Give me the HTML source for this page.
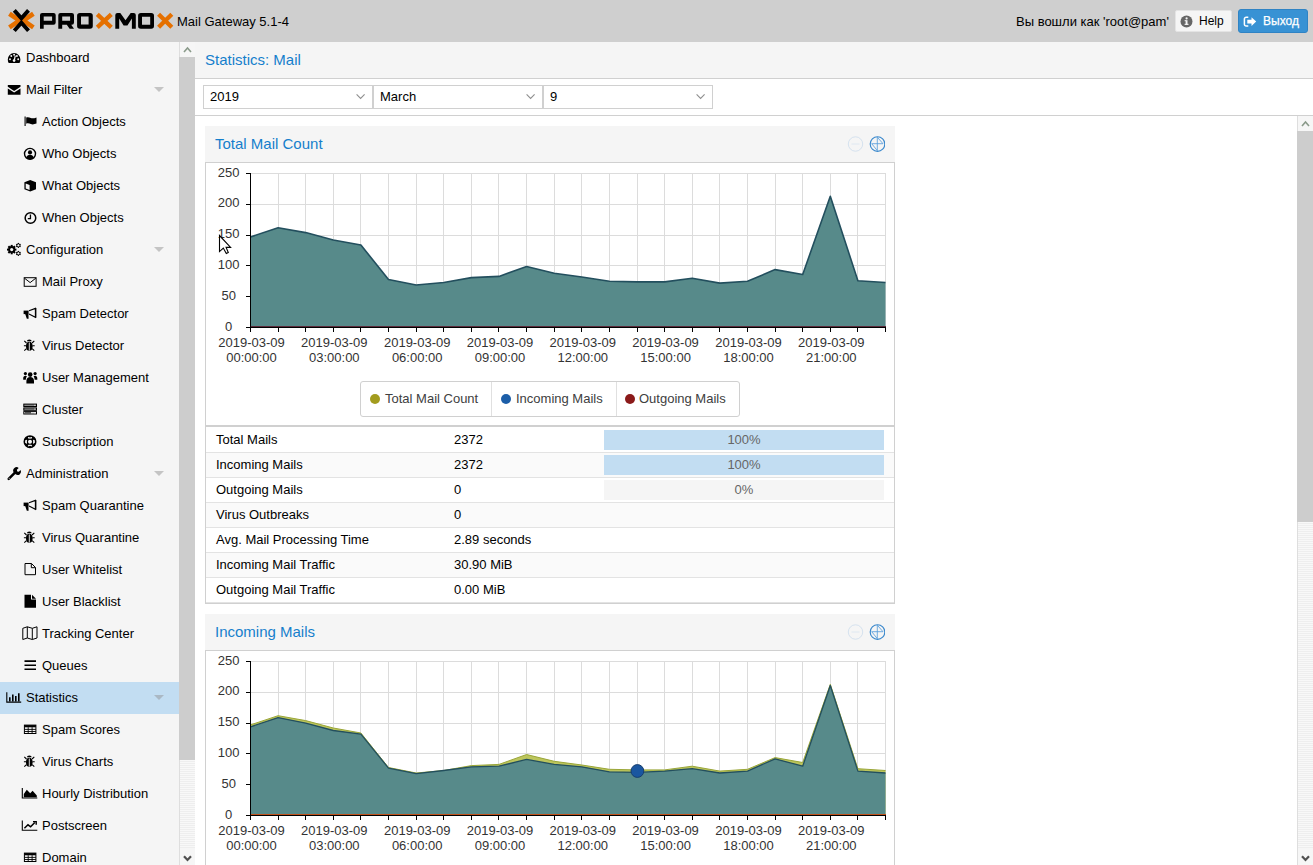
<!DOCTYPE html>
<html><head><meta charset="utf-8"><title>Proxmox Mail Gateway</title>
<style>
*{box-sizing:border-box}
html,body{margin:0;padding:0;width:1313px;height:865px;overflow:hidden;background:#fff;font-family:"Liberation Sans",sans-serif;font-size:13px;color:#000}
.abs{position:absolute}
#hdr{position:absolute;left:0;top:0;width:1313px;height:42px;background:#cfcfcf}
#ver{position:absolute;left:177px;top:14px;line-height:16px;font-size:13px;color:#000}
#login{position:absolute;left:1016px;top:14px;line-height:16px;color:#000}
#help{position:absolute;left:1175px;top:10px;width:57px;height:22px;background:#f5f5f5;border:1px solid #e4e4e4;border-radius:2px}
#help span{position:absolute;left:23px;top:3px;font-size:12px;line-height:15px;color:#000}
#logout{position:absolute;left:1238px;top:9px;width:70px;height:24px;background:#3892d4;border:1px solid #2f83c4;border-radius:3px}
#logout span{position:absolute;left:24px;top:4px;font-size:12px;line-height:15px;color:#fff;-webkit-text-stroke:.25px #fff}
#nav{position:absolute;left:0;top:42px;width:179px;height:823px;background:#f5f5f5;overflow:hidden}
.nrow{position:absolute;left:0;width:179px;height:32px}
.nrow.sel{background:#c2ddf2}
.nic{position:absolute;top:9px;overflow:visible}
.ntx{position:absolute;top:8px;line-height:16px;white-space:nowrap}
.nexp{position:absolute;left:154px;top:13px;width:0;height:0;border-left:5.5px solid transparent;border-right:5.5px solid transparent;border-top:5px solid #c4c4c4}
.nrow.sel .nexp{border-top-color:#aab8c4}
.sb{position:absolute;width:16px;background:repeating-linear-gradient(to bottom,#f8f8f8 0px,#f8f8f8 1px,#eeeeee 1px,#eeeeee 2px);border-left:1px solid #dedede}
.sb .up{position:absolute;left:0;top:0;width:15px;height:15px;background:#f6f6f6}
.sb .dn{position:absolute;left:0;bottom:0;width:15px;height:17px;background:#f6f6f6}
.sb .thumb{position:absolute;left:-1px;top:15px;width:16px;background:#cdcdcd}
.sb svg{position:absolute}
#main{position:absolute;left:195px;top:42px;width:1118px;height:823px;background:#fff}
#title{position:absolute;left:0;top:0;width:1118px;height:37px;background:#f5f5f5;border-bottom:1px solid #d0d0d0}
#title span{position:absolute;left:10px;top:9px;font-size:15px;line-height:18px;color:#157fcc}
#tbar{position:absolute;left:0;top:37px;width:1118px;height:37px;background:#fff;border-bottom:1px solid #d0d0d0}
.combo{position:absolute;top:6px;height:24px;border:1px solid #d0d0d0;background:#fff}
.combo span{position:absolute;left:6px;top:3px;line-height:16px}
.combo svg{position:absolute;right:6px;top:7px}
.panel{position:absolute;left:10px;width:690px;background:#fff}
.phdr{position:absolute;left:0;top:0;width:690px;height:37px;background:#f5f5f5;border-bottom:1px solid #d0d0d0}
.phdr span{position:absolute;left:10px;top:9px;font-size:15px;line-height:18px;color:#157fcc}
.tools{position:absolute;left:640px;top:8px}
.pbody{position:absolute;left:0;top:37px;width:690px;border:1px solid #d0d0d0;border-top:none}
svg.chart{position:absolute;left:0;top:0}
svg.chart text{font-family:"Liberation Sans",sans-serif;font-size:13px;fill:#333}
.legend{position:absolute;left:155px;top:218px;width:380px;height:36px;border:1px solid #d0d0d0;border-radius:3px;background:#fff}
.litem{position:absolute;top:0;height:34px;border-right:1px solid #e0e0e0}
.litem i{position:absolute;left:9px;top:12px;width:10px;height:10px;border-radius:50%}
.litem span{position:absolute;left:24px;top:9px;line-height:16px;color:#404040;white-space:nowrap}
.trow{position:absolute;left:206px;width:688px;height:25px;background:#fff}
.trow.alt{background:#fafafa}
.tc1{position:absolute;left:10px;top:5px;line-height:16px}
.tc2{position:absolute;left:248px;top:5px;line-height:16px}
.pbar{position:absolute;left:398px;top:3px;width:280px;height:20px;background:#f5f5f5}
.pfill{position:absolute;left:0;top:0;height:20px;background:#c2ddf2}
.ptx{position:absolute;left:0;width:280px;top:2px;line-height:16px;text-align:center;color:#666}

</style></head><body>
<div id="hdr"><svg style="position:absolute;left:0;top:0" width="180" height="42" viewBox="0 0 180 42">
<g fill="none" stroke-linecap="butt">
<path d="M9.4 13.7L19.6 20.55 9.4 27.4" stroke="#e57000" stroke-width="4.7"/>
<path d="M33.4 13.7L23.2 20.55 33.4 27.4" stroke="#e57000" stroke-width="4.7"/>
<path d="M14.3 10.4L21.4 18.4 28.5 10.4" stroke="#000" stroke-width="3.9"/>
<path d="M14.3 30.7L21.4 22.7 28.5 30.7" stroke="#000" stroke-width="3.9"/>
</g>
<g fill="#000" fill-rule="evenodd">
<path d="M40 15.1a2.2 2.2 0 0 1 2.2-2.2H53.5a2.2 2.2 0 0 1 2.2 2.2V22.6a2.2 2.2 0 0 1-2.2 2.2H43.7V28.8H40z M43.7 16.4V20.8H52.1V16.4z"/>
<path d="M58.3 15.1a2.2 2.2 0 0 1 2.2-2.2H71.8a2.2 2.2 0 0 1 2.2 2.2V22.6a2.2 2.2 0 0 1-2.2 2.2H71.2L74 28.8H69.6L66.8 24.8H62.2V28.8H58.3z M62.2 16.4V20.8H70.1V16.4z"/>
<path d="M79.9 12.9H90a2.8 2.8 0 0 1 2.8 2.8V26a2.8 2.8 0 0 1-2.8 2.8H79.9a2.8 2.8 0 0 1-2.8-2.8V15.7a2.8 2.8 0 0 1 2.8-2.8z M81 16.6V24.6H88.6V16.6z"/>
<path d="M117.5 12.9H120.3L125.5 20.2 130.7 12.9H133.6a2.2 2.2 0 0 1 2.2 2.2V28.8H131.9V18.6L127.4 25.6H123.6L119.2 18.6V28.8H115.3V15.1a2.2 2.2 0 0 1 2.2-2.2z"/>
<path d="M140.9 12.9H151.2a2.8 2.8 0 0 1 2.8 2.8V26a2.8 2.8 0 0 1-2.8 2.8H140.9a2.8 2.8 0 0 1-2.8-2.8V15.7a2.8 2.8 0 0 1 2.8-2.8z M142 16.7V24.7H150.2V16.7z"/>
</g>
<g stroke="#e57000" stroke-width="4.3" fill="none">
<path d="M97.3 14.3L111.3 27.3M111.3 14.3L97.3 27.3"/>
<path d="M158.6 14.3L171.8 27.3M171.8 14.3L158.6 27.3"/>
</g>
</svg>
<div id="ver">Mail Gateway 5.1-4</div>
<div id="login">Вы вошли как 'root@pam'</div>
<div id="help"><svg style="position:absolute;left:4px;top:4px" width="13" height="13" viewBox="0 0 13 13"><circle cx="6.5" cy="6.5" r="6" fill="#666"/><rect x="5.6" y="5.2" width="1.9" height="4.5" fill="#f5f5f5"/><rect x="4.6" y="8.8" width="3.9" height="1.1" fill="#f5f5f5"/><rect x="4.6" y="5.2" width="1.5" height="1" fill="#f5f5f5"/><circle cx="6.6" cy="3.4" r="1.1" fill="#f5f5f5"/></svg><span>Help</span></div>
<div id="logout"><svg style="position:absolute;left:4px;top:5px" width="15" height="13" viewBox="0 0 15 13"><path d="M5.3 2.2H3.2A1.8 1.8 0 0 0 1.4 4v5.2A1.8 1.8 0 0 0 3.2 11H5.3" fill="none" stroke="#fff" stroke-width="1.5"/><path d="M4.3 4.8h4.2V2.2l4.7 4.4-4.7 4.4V8.4H4.3z" fill="#fff"/></svg><span>Выход</span></div>
</div>
<div id="nav"><div class="nrow" style="top:0px"><svg class="nic" style="left:7px" width="14" height="14" viewBox="0 0 14 14"><path d="M7.1 2A6.4 6.4 0 0 0 .8 8.4c0 1.4.3 2.6.9 3.6h10.8c.6-1 .9-2.2.9-3.6A6.4 6.4 0 0 0 7.1 2z" fill="#000"/><circle cx="3" cy="8.2" r=".95" fill="#f5f5f5"/><circle cx="4.3" cy="5" r=".95" fill="#f5f5f5"/><circle cx="7.1" cy="3.8" r=".95" fill="#f5f5f5"/><circle cx="9.9" cy="5" r=".95" fill="#f5f5f5"/><circle cx="11.2" cy="8.2" r=".95" fill="#f5f5f5"/><path d="M8.3 4.6L7.3 9" stroke="#f5f5f5" stroke-width="1.2"/><circle cx="7.1" cy="9.6" r="1.3" fill="#f5f5f5"/></svg><span class="ntx" style="left:26px">Dashboard</span></div><div class="nrow" style="top:32px"><svg class="nic" style="left:7px" width="14" height="14" viewBox="0 0 14 14"><path d="M.8 2h12.7v1.8L7.15 7.9.8 3.8z" fill="#000"/><path d="M.8 5.6L7.15 9.6l6.35-4V11.8H.8z" fill="#000"/></svg><span class="ntx" style="left:26px">Mail Filter</span><span class="nexp"></span></div><div class="nrow" style="top:64px"><svg class="nic" style="left:23px" width="14" height="14" viewBox="0 0 14 14"><path d="M2.1 1.5V11" stroke="#000" stroke-width="1.1"/><path d="M3.2 2.6c1.6-1 3.2-.2 4.6.4 1.6.6 3.5.2 5.7-.6v6.2c-2.2.8-4 1.1-5.7.5-1.4-.6-3-1.3-4.6-.3z" fill="#000"/></svg><span class="ntx" style="left:42px">Action Objects</span></div><div class="nrow" style="top:96px"><svg class="nic" style="left:23px" width="14" height="14" viewBox="0 0 14 14"><circle cx="7" cy="6.85" r="5.5" fill="none" stroke="#000" stroke-width="1.4"/><circle cx="7" cy="5.4" r="2.1" fill="#000"/><path d="M3.1 10.8c.6-2 2.1-3 3.9-3s3.3 1 3.9 3c-1 1-2.4 1.6-3.9 1.6s-2.9-.6-3.9-1.6z" fill="#000"/></svg><span class="ntx" style="left:42px">Who Objects</span></div><div class="nrow" style="top:128px"><svg class="nic" style="left:23px" width="14" height="14" viewBox="0 0 14 14"><path d="M7.2 1L13 3.2V10.3L7.2 12.5 1.4 10.3V3.2z" fill="#000"/><path d="M2.7 4.5L6.6 6v5l-3.9-1.5z" fill="#f5f5f5"/><path d="M2.9 3.6l4.3-1.5 4.3 1.5-4.3 1.5z" fill="#000"/></svg><span class="ntx" style="left:42px">What Objects</span></div><div class="nrow" style="top:160px"><svg class="nic" style="left:23px" width="14" height="14" viewBox="0 0 14 14"><circle cx="7.45" cy="7" r="5.3" fill="none" stroke="#000" stroke-width="1.5"/><path d="M7.45 3.6V7.6H4.8" fill="none" stroke="#000" stroke-width="1.3"/></svg><span class="ntx" style="left:42px">When Objects</span></div><div class="nrow" style="top:192px"><svg class="nic" style="left:7px" width="14" height="14" viewBox="0 0 14 14"><g transform="translate(4.7 6.6)" fill="#000"><rect x="-1" y="-4.7" width="2" height="2" transform="rotate(0)"/><rect x="-1" y="-4.7" width="2" height="2" transform="rotate(45)"/><rect x="-1" y="-4.7" width="2" height="2" transform="rotate(90)"/><rect x="-1" y="-4.7" width="2" height="2" transform="rotate(135)"/><rect x="-1" y="-4.7" width="2" height="2" transform="rotate(180)"/><rect x="-1" y="-4.7" width="2" height="2" transform="rotate(225)"/><rect x="-1" y="-4.7" width="2" height="2" transform="rotate(270)"/><rect x="-1" y="-4.7" width="2" height="2" transform="rotate(315)"/><circle r="3.5"/><circle r="1.6" fill="#f5f5f5"/></g><g transform="translate(11.4 2.4)" fill="#000"><rect x="-.55" y="-2.5" width="1.1" height="1.1" transform="rotate(0)"/><rect x="-.55" y="-2.5" width="1.1" height="1.1" transform="rotate(60)"/><rect x="-.55" y="-2.5" width="1.1" height="1.1" transform="rotate(120)"/><rect x="-.55" y="-2.5" width="1.1" height="1.1" transform="rotate(180)"/><rect x="-.55" y="-2.5" width="1.1" height="1.1" transform="rotate(240)"/><rect x="-.55" y="-2.5" width="1.1" height="1.1" transform="rotate(300)"/><circle r="1.6" fill="none" stroke="#000" stroke-width="1"/></g><g transform="translate(11.4 10.4)" fill="#000"><rect x="-.55" y="-2.5" width="1.1" height="1.1" transform="rotate(0)"/><rect x="-.55" y="-2.5" width="1.1" height="1.1" transform="rotate(60)"/><rect x="-.55" y="-2.5" width="1.1" height="1.1" transform="rotate(120)"/><rect x="-.55" y="-2.5" width="1.1" height="1.1" transform="rotate(180)"/><rect x="-.55" y="-2.5" width="1.1" height="1.1" transform="rotate(240)"/><rect x="-.55" y="-2.5" width="1.1" height="1.1" transform="rotate(300)"/><circle r="1.6" fill="none" stroke="#000" stroke-width="1"/></g></svg><span class="ntx" style="left:26px">Configuration</span><span class="nexp"></span></div><div class="nrow" style="top:224px"><svg class="nic" style="left:23px" width="14" height="14" viewBox="0 0 14 14"><rect x="1.2" y="2.7" width="11.9" height="8.6" fill="none" stroke="#000" stroke-width="1"/><path d="M1.4 3.1L7.15 7.6l5.75-4.5" fill="none" stroke="#000" stroke-width="1"/></svg><span class="ntx" style="left:42px">Mail Proxy</span></div><div class="nrow" style="top:256px"><svg class="nic" style="left:23px" width="14" height="14" viewBox="0 0 14 14"><path d="M.6 3.6H5.6V7.1H.6z" fill="#000"/><path d="M2.2 7.1H5.4L5.6 11.7H3.8z" fill="#000"/><path d="M6 3.7L12.4 1.4V10.3L6 7.1" fill="none" stroke="#000" stroke-width="1.1"/><path d="M12.8 1V10.8" stroke="#000" stroke-width="1.2"/></svg><span class="ntx" style="left:42px">Spam Detector</span></div><div class="nrow" style="top:288px"><svg class="nic" style="left:23px" width="14" height="14" viewBox="0 0 14 14"><path d="M3.9 2.2A2.4 1.7 0 0 1 8.7 2.2z" fill="#000"/><ellipse cx="6.3" cy="7.3" rx="3.3" ry="4.5" fill="#000"/><path d="M6.3 3.5v8" stroke="#f5f5f5" stroke-width=".9"/><path d="M1.3 1.8l2.2 2.2M11.3 1.8L9.1 4M.9 6.8h2.4M11.7 6.8H9.3M1.3 11.7l2.2-2M11.3 11.7l-2.2-2" stroke="#000" stroke-width="1.1"/></svg><span class="ntx" style="left:42px">Virus Detector</span></div><div class="nrow" style="top:320px"><svg class="nic" style="left:23px" width="14" height="14" viewBox="0 0 14 14"><circle cx="7.2" cy="3.6" r="2.3" fill="#000"/><circle cx="2.4" cy="2.6" r="1.6" fill="#000"/><circle cx="12.1" cy="2.6" r="1.6" fill="#000"/><path d="M3.4 12.6V10c0-2.6 1.5-3.9 3.8-3.9s3.8 1.3 3.8 3.9v2.6z" fill="#000"/><path d="M.2 8.8V7.3c0-1.6.9-2.5 2.2-2.5.7 0 1.2.2 1.6.5-.7.7-1.1 1.9-1.2 3.5z M14.3 8.8V7.3c0-1.6-.9-2.5-2.2-2.5-.7 0-1.2.2-1.6.5.7.7 1.1 1.9 1.2 3.5z" fill="#000"/></svg><span class="ntx" style="left:42px">User Management</span></div><div class="nrow" style="top:352px"><svg class="nic" style="left:23px" width="14" height="14" viewBox="0 0 14 14"><rect x=".8" y="1.1" width="12.7" height="2.4" fill="#888" stroke="#000" stroke-width="1"/><rect x=".8" y="4.9" width="12.7" height="2.4" fill="#888" stroke="#000" stroke-width="1"/><rect x=".8" y="8.6" width="12.7" height="2.4" fill="#f5f5f5" stroke="#000" stroke-width="1"/><path d="M11.3 2.3h1.2M11.3 6.1h1.2M11.3 9.8h1.2" stroke="#f5f5f5" stroke-width=".9"/><path d="M2 9.8h6" stroke="#000" stroke-width=".9"/></svg><span class="ntx" style="left:42px">Cluster</span></div><div class="nrow" style="top:384px"><svg class="nic" style="left:23px" width="14" height="14" viewBox="0 0 14 14"><circle cx="7" cy="6.65" r="5.4" fill="none" stroke="#000" stroke-width="2.2"/><circle cx="7" cy="6.65" r="2.6" fill="none" stroke="#000" stroke-width="1.2"/><path d="M3.2 2.85l2 2M10.8 2.85l-2 2M3.2 10.45l2-2M10.8 10.45l-2-2" stroke="#000" stroke-width="2.2"/><path d="M2.6 5.2v2.9M11.4 5.2v2.9M5.55 2v1M8.45 2v1M5.55 10.3v1M8.45 10.3v1" stroke="#f5f5f5" stroke-width=".9"/></svg><span class="ntx" style="left:42px">Subscription</span></div><div class="nrow" style="top:416px"><svg class="nic" style="left:7px" width="14" height="14" viewBox="0 0 14 14"><path d="M1.7 11.8l6-6" stroke="#000" stroke-width="2.5" stroke-linecap="round"/><path d="M6.6 5.2A3.4 3.4 0 0 1 11.7.9L9.9 2.8l.3 1.6 1.6.3L13.6 2.9A3.4 3.4 0 0 1 8.6 7.3z" fill="#000"/><circle cx="2.2" cy="11.3" r=".5" fill="#f5f5f5"/></svg><span class="ntx" style="left:26px">Administration</span><span class="nexp"></span></div><div class="nrow" style="top:448px"><svg class="nic" style="left:23px" width="14" height="14" viewBox="0 0 14 14"><path d="M.6 3.6H5.6V7.1H.6z" fill="#000"/><path d="M2.2 7.1H5.4L5.6 11.7H3.8z" fill="#000"/><path d="M6 3.7L12.4 1.4V10.3L6 7.1" fill="none" stroke="#000" stroke-width="1.1"/><path d="M12.8 1V10.8" stroke="#000" stroke-width="1.2"/></svg><span class="ntx" style="left:42px">Spam Quarantine</span></div><div class="nrow" style="top:480px"><svg class="nic" style="left:23px" width="14" height="14" viewBox="0 0 14 14"><path d="M3.9 2.2A2.4 1.7 0 0 1 8.7 2.2z" fill="#000"/><ellipse cx="6.3" cy="7.3" rx="3.3" ry="4.5" fill="#000"/><path d="M6.3 3.5v8" stroke="#f5f5f5" stroke-width=".9"/><path d="M1.3 1.8l2.2 2.2M11.3 1.8L9.1 4M.9 6.8h2.4M11.7 6.8H9.3M1.3 11.7l2.2-2M11.3 11.7l-2.2-2" stroke="#000" stroke-width="1.1"/></svg><span class="ntx" style="left:42px">Virus Quarantine</span></div><div class="nrow" style="top:512px"><svg class="nic" style="left:23px" width="14" height="14" viewBox="0 0 14 14"><path d="M2 .5h6.5L12.5 4.5V11.7H2z" fill="none" stroke="#000" stroke-width="1"/><path d="M8.3.6V4.7h4.1" fill="none" stroke="#000" stroke-width="1"/></svg><span class="ntx" style="left:42px">User Whitelist</span></div><div class="nrow" style="top:544px"><svg class="nic" style="left:23px" width="14" height="14" viewBox="0 0 14 14"><path d="M1.5 -.3H8V4.6h5V12.7H1.5z" fill="#000"/><path d="M9 -.3L13 3.7H9z" fill="#000"/></svg><span class="ntx" style="left:42px">User Blacklist</span></div><div class="nrow" style="top:576px"><svg class="nic" style="left:23px" width="14" height="14" viewBox="0 0 14 14"><path d="M-.2 1.3L4.3-.2 9.3 1.3 14 -.2V11L9.3 12.5 4.3 11-.2 12.5z M4.3-.2V11 M9.3 1.3v11.2" fill="none" stroke="#000" stroke-width="1" stroke-linejoin="round"/></svg><span class="ntx" style="left:42px">Tracking Center</span></div><div class="nrow" style="top:608px"><svg class="nic" style="left:23px" width="14" height="14" viewBox="0 0 14 14"><path d="M1.5 2.1h11.5M1.5 6.2h11.5M1.5 10.3h11.5" stroke="#000" stroke-width="1.6"/></svg><span class="ntx" style="left:42px">Queues</span></div><div class="nrow sel" style="top:640px"><svg class="nic" style="left:7px" width="14" height="14" viewBox="0 0 14 14"><path d="M-.2 1.3V11.1H14.2" fill="none" stroke="#000" stroke-width="1.1"/><path d="M2.8 6.2v4.2M5.8 3.6v6.8M8.8 5v5.4M11.8 2.2v8.2" stroke="#000" stroke-width="1.6"/></svg><span class="ntx" style="left:26px">Statistics</span><span class="nexp"></span></div><div class="nrow" style="top:672px"><svg class="nic" style="left:23px" width="14" height="14" viewBox="0 0 14 14"><rect x="1.4" y="2.1" width="11.5" height="8.4" fill="none" stroke="#000" stroke-width="1"/><rect x="1.4" y="2.1" width="11.5" height="2.2" fill="#000"/><path d="M1.4 6.4h11.5M1.4 8.5h11.5M5.2 4.2v6.3M9.1 4.2v6.3" stroke="#000" stroke-width=".9"/></svg><span class="ntx" style="left:42px">Spam Scores</span></div><div class="nrow" style="top:704px"><svg class="nic" style="left:23px" width="14" height="14" viewBox="0 0 14 14"><path d="M3.9 2.2A2.4 1.7 0 0 1 8.7 2.2z" fill="#000"/><ellipse cx="6.3" cy="7.3" rx="3.3" ry="4.5" fill="#000"/><path d="M6.3 3.5v8" stroke="#f5f5f5" stroke-width=".9"/><path d="M1.3 1.8l2.2 2.2M11.3 1.8L9.1 4M.9 6.8h2.4M11.7 6.8H9.3M1.3 11.7l2.2-2M11.3 11.7l-2.2-2" stroke="#000" stroke-width="1.1"/></svg><span class="ntx" style="left:42px">Virus Charts</span></div><div class="nrow" style="top:736px"><svg class="nic" style="left:23px" width="14" height="14" viewBox="0 0 14 14"><path d="M-.7 1V11H14.3" fill="none" stroke="#000" stroke-width="1.1"/><path d="M.8 10.3V7.1L3.8 2.8 7.2 6.3 9.6 3.8 13.8 8.6v1.7z" fill="#000"/></svg><span class="ntx" style="left:42px">Hourly Distribution</span></div><div class="nrow" style="top:768px"><svg class="nic" style="left:23px" width="14" height="14" viewBox="0 0 14 14"><path d="M-.7 1.4V11.3H14.3" fill="none" stroke="#000" stroke-width="1.1"/><path d="M1.4 9.3L5 5.8 7.6 7.8 11.8 3.4" fill="none" stroke="#000" stroke-width="1.5"/><path d="M10 2.6h3.2V5.8" fill="none" stroke="#000" stroke-width="1.4"/></svg><span class="ntx" style="left:42px">Postscreen</span></div><div class="nrow" style="top:800px"><svg class="nic" style="left:23px" width="14" height="14" viewBox="0 0 14 14"><rect x="1.4" y="2.1" width="11.5" height="8.4" fill="none" stroke="#000" stroke-width="1"/><rect x="1.4" y="2.1" width="11.5" height="2.2" fill="#000"/><path d="M1.4 6.4h11.5M1.4 8.5h11.5M5.2 4.2v6.3M9.1 4.2v6.3" stroke="#000" stroke-width=".9"/></svg><span class="ntx" style="left:42px">Domain</span></div></div>
<div class="sb" style="left:179px;top:42px;height:823px"><div class="up"><svg style="left:3px;top:4px" width="9" height="7" viewBox="0 0 9 7"><path d="M1 6L4.5 2 8 6" fill="none" stroke="#8a9a8a" stroke-width="1.6"/></svg></div><div class="thumb" style="height:703px"></div><div class="dn"><svg style="left:3px;top:7px" width="9" height="7" viewBox="0 0 9 7"><path d="M1 1.2L4.5 5 8 1.2" fill="none" stroke="#505050" stroke-width="2.2"/></svg></div></div>
<div id="main">
<div id="title"><span>Statistics: Mail</span></div>
<div id="tbar">
<div class="combo" style="left:8px;width:170px"><span>2019</span><svg width="10" height="7" viewBox="0 0 10 7"><path d="M.6 1.3L4.6 5.4 8.6 1.3" fill="none" stroke="#8f8f8f" stroke-width="1.1"/></svg></div>
<div class="combo" style="left:178px;width:170px"><span>March</span><svg width="10" height="7" viewBox="0 0 10 7"><path d="M.6 1.3L4.6 5.4 8.6 1.3" fill="none" stroke="#8f8f8f" stroke-width="1.1"/></svg></div>
<div class="combo" style="left:348px;width:170px"><span>9</span><svg width="10" height="7" viewBox="0 0 10 7"><path d="M.6 1.3L4.6 5.4 8.6 1.3" fill="none" stroke="#8f8f8f" stroke-width="1.1"/></svg></div>
</div>
</div>
<div id="content" class="abs" style="left:0;top:0;width:1313px;height:865px">
<div class="abs" style="left:205px;top:126px;width:690px;height:37px;background:#f5f5f5;border-bottom:1px solid #d0d0d0"><span class="abs" style="left:10px;top:9px;font-size:15px;line-height:18px;color:#157fcc">Total Mail Count</span><svg class="tools" width="40" height="20" viewBox="0 0 40 20">
<circle cx="10.5" cy="10" r="7.2" fill="none" stroke="#d5e2ef" stroke-width="1"/>
<path d="M6.5 10h8" stroke="#dfe8f1" stroke-width="1"/>
<circle cx="32.5" cy="10" r="7.3" fill="none" stroke="#3a88cc" stroke-width="1.15"/>
<path d="M32.3 3.2v13.6M32.3 3.2l5.7 6.5H26.7L32.3 16.6" fill="none" stroke="#5a9edb" stroke-width=".85"/>
</svg></div>
<div class="abs" style="left:205px;top:163px;width:690px;height:441px;border:1px solid #d0d0d0;border-top:none"></div>
<svg class="chart" width="1313" height="865" viewBox="0 0 1313 865"><path d="M250.5 173V327M278.5 173V327M305.5 173V327M333.5 173V327M360.5 173V327M388.5 173V327M416.5 173V327M443.5 173V327M471.5 173V327M498.5 173V327M526.5 173V327M554.5 173V327M581.5 173V327M609.5 173V327M637.5 173V327M664.5 173V327M692.5 173V327M719.5 173V327M747.5 173V327M775.5 173V327M802.5 173V327M830.5 173V327M857.5 173V327M885.5 173V327M250 173.5H886M250 204.5H886M250 235.5H886M250 265.5H886M250 296.5H886M250 327.5H886" stroke="#dcdcdc" stroke-width="1" fill="none"/><polygon points="250.5,327.5 250.5,236.9 278.1,227.7 305.7,232.6 333.3,240.0 360.9,245.0 388.5,279.5 416.2,285.0 443.8,282.5 471.4,277.6 499.0,276.4 526.6,266.5 554.2,273.3 581.8,277.0 609.4,281.3 637.0,281.9 664.6,281.9 692.2,278.2 719.8,283.1 747.5,281.3 775.1,269.6 802.7,274.5 830.3,196.3 857.9,280.7 885.5,282.5 885.5,327.5" fill="#578a8a" stroke="none"/><polyline points="250.5,236.9 278.1,227.7 305.7,232.6 333.3,240.0 360.9,245.0 388.5,279.5 416.2,285.0 443.8,282.5 471.4,277.6 499.0,276.4 526.6,266.5 554.2,273.3 581.8,277.0 609.4,281.3 637.0,281.9 664.6,281.9 692.2,278.2 719.8,283.1 747.5,281.3 775.1,269.6 802.7,274.5 830.3,196.3 857.9,280.7 885.5,282.5" fill="none" stroke="#234f5e" stroke-width="1.6" stroke-linejoin="round"/><path d="M251 326.5H886" stroke="#5a2a3a" stroke-width="1"/><path d="M250.5 173V332M246 327.5H886M246 173.5H250M246 204.5H250M246 235.5H250M246 265.5H250M246 296.5H250M246 327.5H250M250.5 327V332M278.5 327V332M305.5 327V332M333.5 327V332M360.5 327V332M388.5 327V332M416.5 327V332M443.5 327V332M471.5 327V332M498.5 327V332M526.5 327V332M554.5 327V332M581.5 327V332M609.5 327V332M637.5 327V332M664.5 327V332M692.5 327V332M719.5 327V332M747.5 327V332M775.5 327V332M802.5 327V332M830.5 327V332M857.5 327V332M885.5 327V332" stroke="#000" stroke-width="1" fill="none"/><text x="228.7" y="176.6" text-anchor="middle">250</text><text x="228.7" y="207.4" text-anchor="middle">200</text><text x="228.7" y="238.2" text-anchor="middle">150</text><text x="228.7" y="269.0" text-anchor="middle">100</text><text x="228.7" y="299.8" text-anchor="middle">50</text><text x="228.7" y="330.6" text-anchor="middle">0</text><text x="251.5" y="346.5" text-anchor="middle">2019-03-09</text><text x="251.5" y="361.5" text-anchor="middle">00:00:00</text><text x="334.3" y="346.5" text-anchor="middle">2019-03-09</text><text x="334.3" y="361.5" text-anchor="middle">03:00:00</text><text x="417.2" y="346.5" text-anchor="middle">2019-03-09</text><text x="417.2" y="361.5" text-anchor="middle">06:00:00</text><text x="500.0" y="346.5" text-anchor="middle">2019-03-09</text><text x="500.0" y="361.5" text-anchor="middle">09:00:00</text><text x="582.8" y="346.5" text-anchor="middle">2019-03-09</text><text x="582.8" y="361.5" text-anchor="middle">12:00:00</text><text x="665.6" y="346.5" text-anchor="middle">2019-03-09</text><text x="665.6" y="361.5" text-anchor="middle">15:00:00</text><text x="748.5" y="346.5" text-anchor="middle">2019-03-09</text><text x="748.5" y="361.5" text-anchor="middle">18:00:00</text><text x="831.3" y="346.5" text-anchor="middle">2019-03-09</text><text x="831.3" y="361.5" text-anchor="middle">21:00:00</text></svg>
<div class="legend" style="left:360px;top:381px;width:380px;height:36px">
<div class="litem" style="left:0;width:131px"><i style="background:#a39c1e"></i><span>Total Mail Count</span></div>
<div class="litem" style="left:131px;width:125px"><i style="background:#1c5ea8"></i><span>Incoming Mails</span></div>
<div class="litem" style="left:256px;width:122px;border-right:none"><i style="background:#8b1a1a;left:8px"></i><span style="left:22px">Outgoing Mails</span></div>
</div>
<div class="abs" style="left:206px;top:425px;width:688px;height:2px;background:#d0d0d0"></div>
<div class="trow" style="top:427px"><span class="tc1">Total Mails</span><span class="tc2">2372</span><div class="pbar"><div class="pfill" style="width:100%"></div><span class="ptx">100%</span></div></div><div class="trow alt" style="top:452px"><span class="tc1">Incoming Mails</span><span class="tc2">2372</span><div class="pbar"><div class="pfill" style="width:100%"></div><span class="ptx">100%</span></div></div><div class="trow" style="top:477px"><span class="tc1">Outgoing Mails</span><span class="tc2">0</span><div class="pbar"><div class="pfill" style="width:0%"></div><span class="ptx">0%</span></div></div><div class="trow alt" style="top:502px"><span class="tc1">Virus Outbreaks</span><span class="tc2">0</span></div><div class="trow" style="top:527px"><span class="tc1">Avg. Mail Processing Time</span><span class="tc2">2.89 seconds</span></div><div class="trow alt" style="top:552px"><span class="tc1">Incoming Mail Traffic</span><span class="tc2">30.90 MiB</span></div><div class="trow" style="top:577px"><span class="tc1">Outgoing Mail Traffic</span><span class="tc2">0.00 MiB</span></div><div class="abs" style="left:206px;top:452px;width:688px;height:1px;background:#e3e3e3"></div><div class="abs" style="left:206px;top:477px;width:688px;height:1px;background:#e3e3e3"></div><div class="abs" style="left:206px;top:502px;width:688px;height:1px;background:#e3e3e3"></div><div class="abs" style="left:206px;top:527px;width:688px;height:1px;background:#e3e3e3"></div><div class="abs" style="left:206px;top:552px;width:688px;height:1px;background:#e3e3e3"></div><div class="abs" style="left:206px;top:577px;width:688px;height:1px;background:#e3e3e3"></div><div class="abs" style="left:206px;top:602px;width:688px;height:1px;background:#e3e3e3"></div>
<div class="abs" style="left:205px;top:614px;width:690px;height:37px;background:#f5f5f5;border-bottom:1px solid #d0d0d0"><span class="abs" style="left:10px;top:9px;font-size:15px;line-height:18px;color:#157fcc">Incoming Mails</span><svg class="tools" width="40" height="20" viewBox="0 0 40 20">
<circle cx="10.5" cy="10" r="7.2" fill="none" stroke="#d5e2ef" stroke-width="1"/>
<path d="M6.5 10h8" stroke="#dfe8f1" stroke-width="1"/>
<circle cx="32.5" cy="10" r="7.3" fill="none" stroke="#3a88cc" stroke-width="1.15"/>
<path d="M32.3 3.2v13.6M32.3 3.2l5.7 6.5H26.7L32.3 16.6" fill="none" stroke="#5a9edb" stroke-width=".85"/>
</svg></div>
<div class="abs" style="left:205px;top:651px;width:690px;height:300px;border:1px solid #d0d0d0;border-top:none"></div>
<svg class="chart" width="1313" height="865" viewBox="0 0 1313 865"><path d="M250.5 661V815M278.5 661V815M305.5 661V815M333.5 661V815M360.5 661V815M388.5 661V815M416.5 661V815M443.5 661V815M471.5 661V815M498.5 661V815M526.5 661V815M554.5 661V815M581.5 661V815M609.5 661V815M637.5 661V815M664.5 661V815M692.5 661V815M719.5 661V815M747.5 661V815M775.5 661V815M802.5 661V815M830.5 661V815M857.5 661V815M885.5 661V815M250 661.5H886M250 692.5H886M250 723.5H886M250 753.5H886M250 784.5H886M250 815.5H886" stroke="#dcdcdc" stroke-width="1" fill="none"/><polygon points="250.5,815.5 250.5,724.9 278.1,715.7 305.7,720.6 333.3,728.0 360.9,733.0 388.5,767.5 416.2,773.0 443.8,770.5 471.4,765.6 499.0,764.4 526.6,754.5 554.2,761.3 581.8,765.0 609.4,769.3 637.0,769.9 664.6,769.9 692.2,766.2 719.8,771.1 747.5,769.3 775.1,757.6 802.7,762.5 830.3,684.3 857.9,768.7 885.5,770.5 885.5,815.5" fill="#bcc55c" stroke="none"/><polyline points="250.5,724.9 278.1,715.7 305.7,720.6 333.3,728.0 360.9,733.0 388.5,767.5 416.2,773.0 443.8,770.5 471.4,765.6 499.0,764.4 526.6,754.5 554.2,761.3 581.8,765.0 609.4,769.3 637.0,769.9 664.6,769.9 692.2,766.2 719.8,771.1 747.5,769.3 775.1,757.6 802.7,762.5 830.3,684.3 857.9,768.7 885.5,770.5" fill="none" stroke="#9aa638" stroke-width="1.0" stroke-linejoin="round"/><polygon points="250.5,815.5 250.5,726.8 278.1,717.6 305.7,723.1 333.3,730.5 360.9,734.2 388.5,768.1 416.2,773.6 443.8,770.5 471.4,766.8 499.0,766.2 526.6,759.4 554.2,764.4 581.8,766.8 609.4,771.8 637.0,772.4 664.6,771.1 692.2,768.7 719.8,773.0 747.5,771.1 775.1,758.8 802.7,766.2 830.3,685.5 857.9,771.1 885.5,773.0 885.5,815.5" fill="#578a8a" stroke="none"/><polyline points="250.5,726.8 278.1,717.6 305.7,723.1 333.3,730.5 360.9,734.2 388.5,768.1 416.2,773.6 443.8,770.5 471.4,766.8 499.0,766.2 526.6,759.4 554.2,764.4 581.8,766.8 609.4,771.8 637.0,772.4 664.6,771.1 692.2,768.7 719.8,773.0 747.5,771.1 775.1,758.8 802.7,766.2 830.3,685.5 857.9,771.1 885.5,773.0" fill="none" stroke="#234f5e" stroke-width="1.3" stroke-linejoin="round"/><path d="M251 814.5H886" stroke="#c0501a" stroke-width="1"/><path d="M250.5 661V820M246 815.5H886M246 661.5H250M246 692.5H250M246 723.5H250M246 753.5H250M246 784.5H250M246 815.5H250M250.5 815V820M278.5 815V820M305.5 815V820M333.5 815V820M360.5 815V820M388.5 815V820M416.5 815V820M443.5 815V820M471.5 815V820M498.5 815V820M526.5 815V820M554.5 815V820M581.5 815V820M609.5 815V820M637.5 815V820M664.5 815V820M692.5 815V820M719.5 815V820M747.5 815V820M775.5 815V820M802.5 815V820M830.5 815V820M857.5 815V820M885.5 815V820" stroke="#000" stroke-width="1" fill="none"/><text x="228.7" y="664.6" text-anchor="middle">250</text><text x="228.7" y="695.4" text-anchor="middle">200</text><text x="228.7" y="726.2" text-anchor="middle">150</text><text x="228.7" y="757.0" text-anchor="middle">100</text><text x="228.7" y="787.8" text-anchor="middle">50</text><text x="228.7" y="818.6" text-anchor="middle">0</text><text x="251.5" y="834.5" text-anchor="middle">2019-03-09</text><text x="251.5" y="849.5" text-anchor="middle">00:00:00</text><text x="334.3" y="834.5" text-anchor="middle">2019-03-09</text><text x="334.3" y="849.5" text-anchor="middle">03:00:00</text><text x="417.2" y="834.5" text-anchor="middle">2019-03-09</text><text x="417.2" y="849.5" text-anchor="middle">06:00:00</text><text x="500.0" y="834.5" text-anchor="middle">2019-03-09</text><text x="500.0" y="849.5" text-anchor="middle">09:00:00</text><text x="582.8" y="834.5" text-anchor="middle">2019-03-09</text><text x="582.8" y="849.5" text-anchor="middle">12:00:00</text><text x="665.6" y="834.5" text-anchor="middle">2019-03-09</text><text x="665.6" y="849.5" text-anchor="middle">15:00:00</text><text x="748.5" y="834.5" text-anchor="middle">2019-03-09</text><text x="748.5" y="849.5" text-anchor="middle">18:00:00</text><text x="831.3" y="834.5" text-anchor="middle">2019-03-09</text><text x="831.3" y="849.5" text-anchor="middle">21:00:00</text><circle cx="637.4" cy="771" r="6.4" fill="#1a56a0" stroke="#173e6e" stroke-width="1"/>
</svg>
</div>
<div class="sb" style="left:1297px;top:116px;height:749px"><div class="up"><svg style="left:3px;top:4px" width="9" height="7" viewBox="0 0 9 7"><path d="M1 6L4.5 2 8 6" fill="none" stroke="#8a9a8a" stroke-width="1.6"/></svg></div><div class="thumb" style="height:391px"></div><div class="dn"><svg style="left:3px;top:7px" width="9" height="7" viewBox="0 0 9 7"><path d="M1 1.2L4.5 5 8 1.2" fill="none" stroke="#505050" stroke-width="2.2"/></svg></div></div>
<svg class="abs" style="left:218px;top:234px" width="16" height="22" viewBox="0 0 16 22"><path d="M1.5 1.5V17.6L5.3 14.1 8.3 19.6 10.3 18.6 8.1 13.4H12.6z" fill="#fff" stroke="#000" stroke-width="1.1" stroke-linejoin="miter"/></svg>
</body></html>
